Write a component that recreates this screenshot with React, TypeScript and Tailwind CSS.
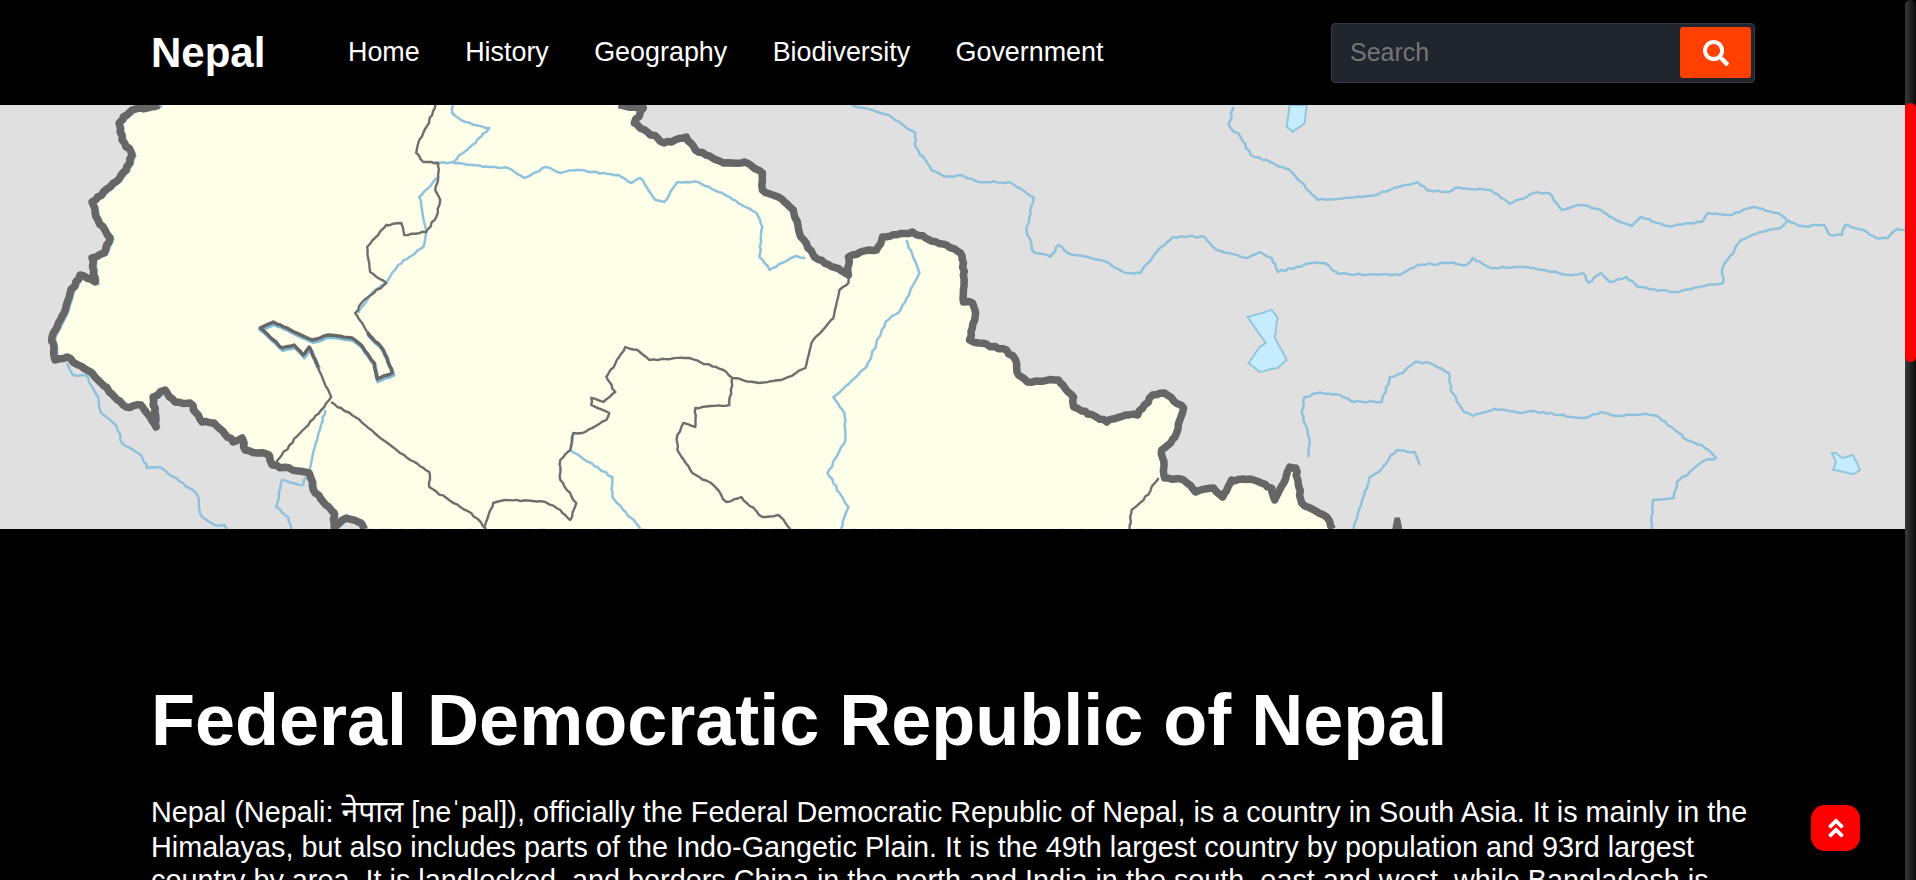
import { FaSearch, FaAngleDoubleUp } from "react-icons/fa";

type Pt = [number, number];

// small jagged offsets so the lines look like the traced map
const rough = (pts: Pt[], amp: number, close = false) => {
  let seed = pts.length * 7 + 3;
  const next = () => {
    seed = (seed * 9301 + 49297) % 233280;
    return seed / 233280 - 0.5;
  };
  let d = `M${pts[0][0]} ${pts[0][1]}`;
  for (let i = 1; i < pts.length; i++) {
    const [ax, ay] = pts[i - 1];
    const [bx, by] = pts[i];
    const steps = Math.max(1, Math.round(Math.hypot(bx - ax, by - ay) / 4));
    for (let s = 1; s <= steps; s++) {
      const t = s / steps;
      const j = s === steps ? 0 : amp;
      d += `L${(ax + (bx - ax) * t + next() * j).toFixed(1)} ${(ay + (by - ay) * t + next() * j).toFixed(1)}`;
    }
  }
  return close ? d + "Z" : d;
};

const westBorder: Pt[] = [[159,105],[132,110],[119,123],[122,140],[132,155],[126,170],[110,187],[92,202],[98,220],[110,238],[104,253],[92,258],[95,282],[80,275],[70,293],[64,313],[52,337],[55,360],[67,357],[92,373],[101,383],[126,407],[141,405],[156,427],[153,397],[165,390],[175,402],[190,403],[202,422],[214,423],[233,442],[242,438],[245,450],[269,455],[272,465],[309,473],[315,493],[334,513],[334,527],[346,518],[361,523],[364,529]];
const northBorder: Pt[] = [[618,105],[643,108],[634,123],[664,143],[686,137],[695,150],[723,163],[744,162],[762,173],[762,190],[778,197],[793,210],[799,233],[814,257],[848,275],[848,257],[860,252],[876,250],[882,237],[912,232],[925,238],[946,245],[960,253],[963,263],[963,302],[972,303],[975,312],[969,340],[978,343],[1006,350],[1015,360],[1018,375],[1027,382],[1058,380],[1073,397],[1073,407],[1106,422],[1125,415],[1137,415],[1152,395],[1164,393],[1183,408],[1176,433],[1170,443],[1161,450],[1164,478],[1183,480],[1195,492],[1213,488],[1222,497],[1231,480],[1253,480],[1271,488],[1274,500],[1283,483],[1289,467],[1295,468],[1301,503],[1326,517],[1332,529]];
const land: Pt[] = [...westBorder, ...[...northBorder].reverse()];

// the looped river boundary, drawn heavier with a blue edge
const riverLoop: Pt[] = [[367,332],[383,350],[392,373],[377,379],[374,363],[361,345],[352,338],[328,335],[312,340],[294,332],[273,322],[260,328],[282,348],[294,345],[303,355],[309,347],[318,367]];

const provinces: Pt[][] = [
  [[435,105],[432,115],[419,140],[416,153],[423,162],[438,163],[438,177],[435,190],[440,200],[436,217],[426,232],[404,235],[401,223],[386,225],[367,247],[370,272],[386,283],[364,300],[355,313],[367,332]],
  [[318,367],[331,397],[329,400],[321,410],[300,433],[276,462]],
  [[331,402],[355,417],[383,440],[410,460],[429,472],[429,487],[453,503],[471,513],[486,529]],
  [[484,527],[493,503],[505,500],[545,502],[560,510],[570,520],[576,503],[560,480],[560,460],[570,450],[573,433],[582,433],[606,420],[609,413],[591,405],[591,398],[603,402],[615,392],[606,377],[625,347],[637,350],[649,360],[689,358],[723,370],[732,378],[759,383],[781,380],[805,368],[811,343],[833,318],[839,290],[848,283],[848,275]],
  [[732,378],[729,405],[695,408],[695,427],[683,423],[677,435],[677,450],[692,473],[713,485],[726,502],[741,497],[762,517],[778,515],[790,529]],
  [[1158,478],[1143,500],[1131,510],[1129,529]],
];

const rivers: Pt[][] = [
  [[453,105],[452,113],[465,122],[489,128],[472,145],[453,162]],
  [[435,162],[459,163],[490,167],[508,168],[524,178],[545,167],[560,173],[576,170],[618,175],[631,183],[640,178],[655,200],[664,202],[677,182],[698,182],[729,197],[756,213],[762,227],[759,257],[769,270],[796,256],[805,258]],
  [[438,177],[419,197],[426,230],[423,247],[398,265],[386,283],[370,295],[358,313]],
  [[67,363],[73,375],[86,375],[98,397],[101,413],[116,425],[122,443],[141,455],[147,468],[159,467],[196,493],[202,517],[214,525],[224,525],[227,529]],
  [[306,477],[303,485],[282,480],[276,507],[288,517],[291,529]],
  [[325,410],[309,470]],
  [[573,433],[570,450],[612,477],[612,497],[640,529]],
  [[906,240],[919,273],[900,310],[885,322],[866,367],[833,397],[844,413],[845,440],[827,473],[848,507],[840,529]],
  [[851,105],[888,115],[915,133],[915,147],[931,170],[946,177],[960,175],[978,182],[1009,182],[1033,197],[1026,230],[1033,252],[1050,257],[1058,245],[1067,253],[1106,262],[1125,273],[1140,273],[1155,253],[1173,237],[1204,237],[1216,250],[1247,258],[1259,252],[1271,258],[1277,272],[1311,263],[1323,263],[1338,274],[1399,275],[1417,265],[1448,263],[1466,265],[1472,258],[1490,268],[1521,267],[1570,275],[1582,273],[1588,283],[1600,273],[1609,282],[1625,277],[1637,287],[1673,292],[1722,283],[1722,267],[1740,240],[1759,232],[1780,228],[1789,220]],
  [[1233,107],[1228,125],[1240,137],[1250,155],[1289,170],[1317,200],[1375,195],[1393,188],[1417,182],[1426,190],[1448,192],[1454,188],[1490,190],[1509,204],[1533,193],[1548,193],[1561,210],[1579,205],[1600,210],[1615,220],[1631,226],[1640,217],[1667,226],[1701,222],[1707,213],[1728,215],[1753,207],[1777,213],[1789,222],[1801,226],[1823,225],[1829,235],[1841,235],[1844,225],[1862,230],[1875,238],[1887,238],[1896,229],[1904,230]],
  [[1308,457],[1309,440],[1301,413],[1304,397],[1317,393],[1335,394],[1350,401],[1381,402],[1389,377],[1402,373],[1414,362],[1429,363],[1448,373],[1450,390],[1463,412],[1472,416],[1494,409],[1521,413],[1530,411],[1582,418],[1600,412],[1615,416],[1643,414],[1658,417],[1686,440],[1701,445],[1715,458],[1701,462],[1676,482],[1673,498],[1652,500],[1651,529]],
  [[1353,529],[1369,477],[1378,472],[1396,450],[1414,452],[1419,465]],
];

const lakes: Pt[][] = [
  [[1289,105],[1306,105],[1304,123],[1292,132],[1286,127]],
  [[1247,317],[1271,310],[1277,318],[1274,337],[1286,360],[1277,368],[1259,372],[1248,363],[1259,347],[1265,343]],
  [[1831,453],[1835,453],[1841,458],[1852,455],[1859,470],[1853,474],[1832,470],[1835,462]],
];

const NepalMap = () => (
  <svg viewBox="0 105 1904 424" className="block h-[424px] w-full blur-[0.6px]" preserveAspectRatio="none">
    <rect x="0" y="105" width="1904" height="424" fill="#e0e0e0" />
    <path d={rough(land, 1.2, true)} fill="#fefee9" />
    {lakes.map((l, i) => (
      <path key={i} d={rough(l, 0.8, true)} fill="#c6ecff" stroke="#93c6de" strokeWidth="2" />
    ))}
    {rivers.map((r, i) => (
      <path key={i} d={rough(r, 1.8)} fill="none" stroke="#8fc2dc" strokeWidth="2.5" strokeLinejoin="round" />
    ))}
    <path d={rough(westBorder, 1.2)} fill="none" stroke="#8fc2dc" strokeWidth="3" transform="translate(3 1)" />
    <path d={rough(riverLoop, 1)} fill="none" stroke="#7fbbd9" strokeWidth="4" transform="translate(1 2)" />
    {provinces.map((p, i) => (
      <path key={i} d={rough(p, 1.6)} fill="none" stroke="#6e6e6e" strokeWidth="2.4" strokeLinejoin="round" />
    ))}
    <path d={rough(riverLoop, 1)} fill="none" stroke="#666666" strokeWidth="3.4" strokeLinejoin="round" />
    <path d={rough(westBorder, 2)} fill="none" stroke="#666666" strokeWidth="7.5" strokeLinejoin="round" />
    <path d={rough(northBorder, 2)} fill="none" stroke="#666666" strokeWidth="7.5" strokeLinejoin="round" />
    <path d="M1393 529 L1395 519 L1398 519 L1400 529Z" fill="#666666" stroke="#666666" strokeWidth="3" />
  </svg>
);

const links = ["Home", "History", "Geography", "Biodiversity", "Government"];

export default function App() {
  return (
    <div className="relative flex h-[880px] overflow-hidden bg-black font-['Liberation_Sans',Arial,sans-serif] text-white">
      <div className="min-w-0 flex-1">
        <nav className="flex h-[105px] items-center justify-between pl-[151px] pr-[150px]">
          <div className="flex items-center">
            <a className="w-[197px] text-[42px] font-bold leading-none">Nepal</a>
            <ul className="flex gap-[45.4px] text-[26.9px]">
              {links.map((link) => (
                <li key={link}>{link}</li>
              ))}
            </ul>
          </div>
          <form className="flex h-[60px] w-[424px] items-center rounded border border-[#343a46] bg-[#20252e] pl-[18px] pr-[3px]">
            <input
              type="text"
              placeholder="Search"
              className="min-w-0 flex-1 bg-transparent text-[25px] outline-none placeholder:text-[#757575]"
            />
            <button type="button" className="flex h-[51px] w-[71px] items-center justify-center rounded-[3px] bg-[#ff4000]">
              <FaSearch className="h-[26px] w-[26px]" />
            </button>
          </form>
        </nav>
        <NepalMap />
        <main className="pl-[151px] pr-[150px] pt-[148px]">
          <h1 className="text-[72px] font-bold leading-[86px]">Federal Democratic Republic of Nepal</h1>
          <p className="mt-[33px] text-[28.8px] leading-[33px]">
            Nepal (Nepali: <span className="font-['Noto_Sans_Devanagari','Lohit_Devanagari','Noto_Sans',sans-serif] text-[30px]">नेपाल</span> [neˈpal]), officially the Federal Democratic Republic of Nepal, is a country in South Asia. It is mainly in the Himalayas, but also includes parts of the Indo-Gangetic Plain. It is the 49th largest country by population and 93rd largest country by area. It is landlocked, and borders China in the north and India in the south, east and west, while Bangladesh is located within only 27 km of its southeastern tip and Bhutan is separated from it by the Indian state of Sikkim.
          </p>
        </main>
      </div>
      <div className="w-[11px] shrink-0 rounded-t-lg bg-gradient-to-r from-[#3a3a3a] to-[#0c0c0c] pt-[103px]">
        <div className="h-[259px] rounded-md bg-[#ff0000]" />
      </div>
      <a className="absolute left-[1811px] top-[805px] flex h-[46px] w-[49px] items-center justify-center rounded-[14px] bg-[#ff0000]">
        <FaAngleDoubleUp className="h-[24px] w-[24px]" />
      </a>
    </div>
  );
}
